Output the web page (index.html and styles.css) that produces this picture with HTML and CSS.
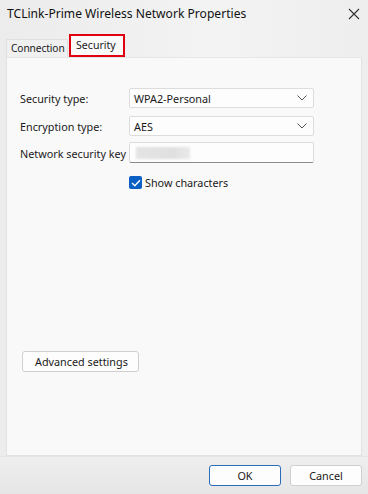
FILE: index.html
```html
<!DOCTYPE html>
<html>
<head>
<meta charset="utf-8">
<link rel="stylesheet" href="styles.css">
</head>
<body>
<div class="window">
  <div class="titlebar">
    <span class="title">TCLink-Prime Wireless Network Properties</span>
    <svg class="close" width="12" height="12" viewBox="0 0 12 12"><path d="M1 1 L11 11 M11 1 L1 11" stroke="#333" stroke-width="1.1" fill="none"/></svg>
  </div>
  <div class="tabs">
    <div class="tab">Connection</div>
    <div class="tab active">Security</div>
  </div>
  <div class="panel">
    <div class="form">
      <div class="row">
        <span class="label">Security type:</span>
        <div class="field select"><span>WPA2-Personal</span>
          <svg width="10" height="6" viewBox="0 0 10 6"><path d="M0.5 0.5 L5 5 L9.5 0.5" stroke="#555" stroke-width="1" fill="none"/></svg>
        </div>
      </div>
      <div class="row">
        <span class="label">Encryption type:</span>
        <div class="field select"><span>AES</span>
          <svg width="10" height="6" viewBox="0 0 10 6"><path d="M0.5 0.5 L5 5 L9.5 0.5" stroke="#555" stroke-width="1" fill="none"/></svg>
        </div>
      </div>
      <div class="row">
        <span class="label">Network security key</span>
        <div class="field input"><span class="blur"></span></div>
      </div>
      <div class="row check-row">
        <span class="label"></span>
        <div class="check">
          <span class="box"><svg width="10" height="8" viewBox="0 0 10 8"><path d="M1 4 L3.8 6.8 L9 1.2" stroke="#fff" stroke-width="1.4" fill="none"/></svg></span>
          <span>Show characters</span>
        </div>
      </div>
    </div>
    <div class="spacer"></div>
    <div class="adv"><button class="btn">Advanced settings</button></div>
  </div>
  <div class="footer">
    <button class="btn ok">OK</button>
    <button class="btn">Cancel</button>
  </div>
</div>
</body>
</html>
```
FILE: styles.css
```css
html, body { margin: 0; padding: 0; }
body {
  width: 368px; height: 494px; overflow: hidden;
  font-family: "Noto Sans", "Open Sans", sans-serif;
  font-size: 10.8px; color: #1a1a1a;
}
.window {
  width: 368px; height: 494px;
  display: flex; flex-direction: column;
  background: linear-gradient(to right, #ececec, #f3f3f3 60%, #eeeeee);
}
.titlebar {
  height: 26px; display: flex; align-items: center; justify-content: space-between;
  padding: 0 8px 0 7px;
}
.title { font-size: 12.1px; color: #111; white-space: nowrap; }
.close { margin-top: 1px; }
.tabs {
  display: flex; align-items: flex-end; height: 31px; padding-left: 6px;
}
.tab {
  height: 18px; line-height: 17px; padding: 0 0 0 4px; font-size: 10.2px;
  border: 1px solid #e0e0e0; border-bottom: none; background: #f0f0f0;
  white-space: nowrap; width: 62px; box-sizing: border-box; letter-spacing: -0.1px;
}
.tab.active {
  height: 23px; line-height: 18px; border: 2px solid #e0000f; padding: 0 5px;
  background: #fafafa; width: 56px; margin-left: 1px; font-size: 10.6px; letter-spacing: 0;
}
.panel {
  flex: 1; margin: 0 6px; background: #f9f9f9;
  border: 1px solid #e2e2e2; border-top-color: #e6e6e6;
  display: flex; flex-direction: column;
  padding: 30px 47px 0 13px;
}
.form { display: flex; flex-direction: column; gap: 8px; }
.row { display: flex; align-items: center; white-space: nowrap; }
.row .label { width: 109px; flex: none; }
.field {
  flex: 1; height: 20px; background: #fdfdfd; border: 1px solid #dcdcdc;
  border-radius: 2px; box-sizing: border-box; display: flex; align-items: center;
  justify-content: space-between; padding: 0 4px 0 4px;
}
.field svg { margin-right: 2px; }
.input { height: 21px; border-bottom: 1px solid #8a8a8a; margin-top: -2px; }
.blur {
  width: 54px; height: 12px; background: linear-gradient(to right, #e4e4e4, #e0e0e0 70%, #eaeaea);
  filter: blur(1px); margin-left: 2px;
}
.check-row { margin-top: 4px; }
.check { display: flex; align-items: center; gap: 3px; }
.box {
  width: 13px; height: 13px; background: #0a5fc4; border-radius: 2px;
  display: flex; align-items: center; justify-content: center;
}
.spacer { flex: 1; }
.adv { padding: 0 0 83px 2px; }
.btn {
  font-family: "Noto Sans", "Open Sans", sans-serif; font-size: 10.8px; color: #1a1a1a;
  background: #fdfdfd; border: 1px solid #cfcfcf; border-radius: 3px;
  height: 22px; padding: 0 12px; box-sizing: border-box; white-space: nowrap;
}
.adv .btn { width: 117px; height: 21px; }
.footer {
  height: 37px; flex: none; display: flex; justify-content: flex-end; align-items: center; gap: 9px;
  padding-right: 6px; border-top: 1px solid #e4e4e4;
  background: linear-gradient(#eeeeee, #e6e6e6);
}
.footer .btn { width: 72px; height: 21px; }
.footer .ok { border-color: #2b6cb8; }
```
